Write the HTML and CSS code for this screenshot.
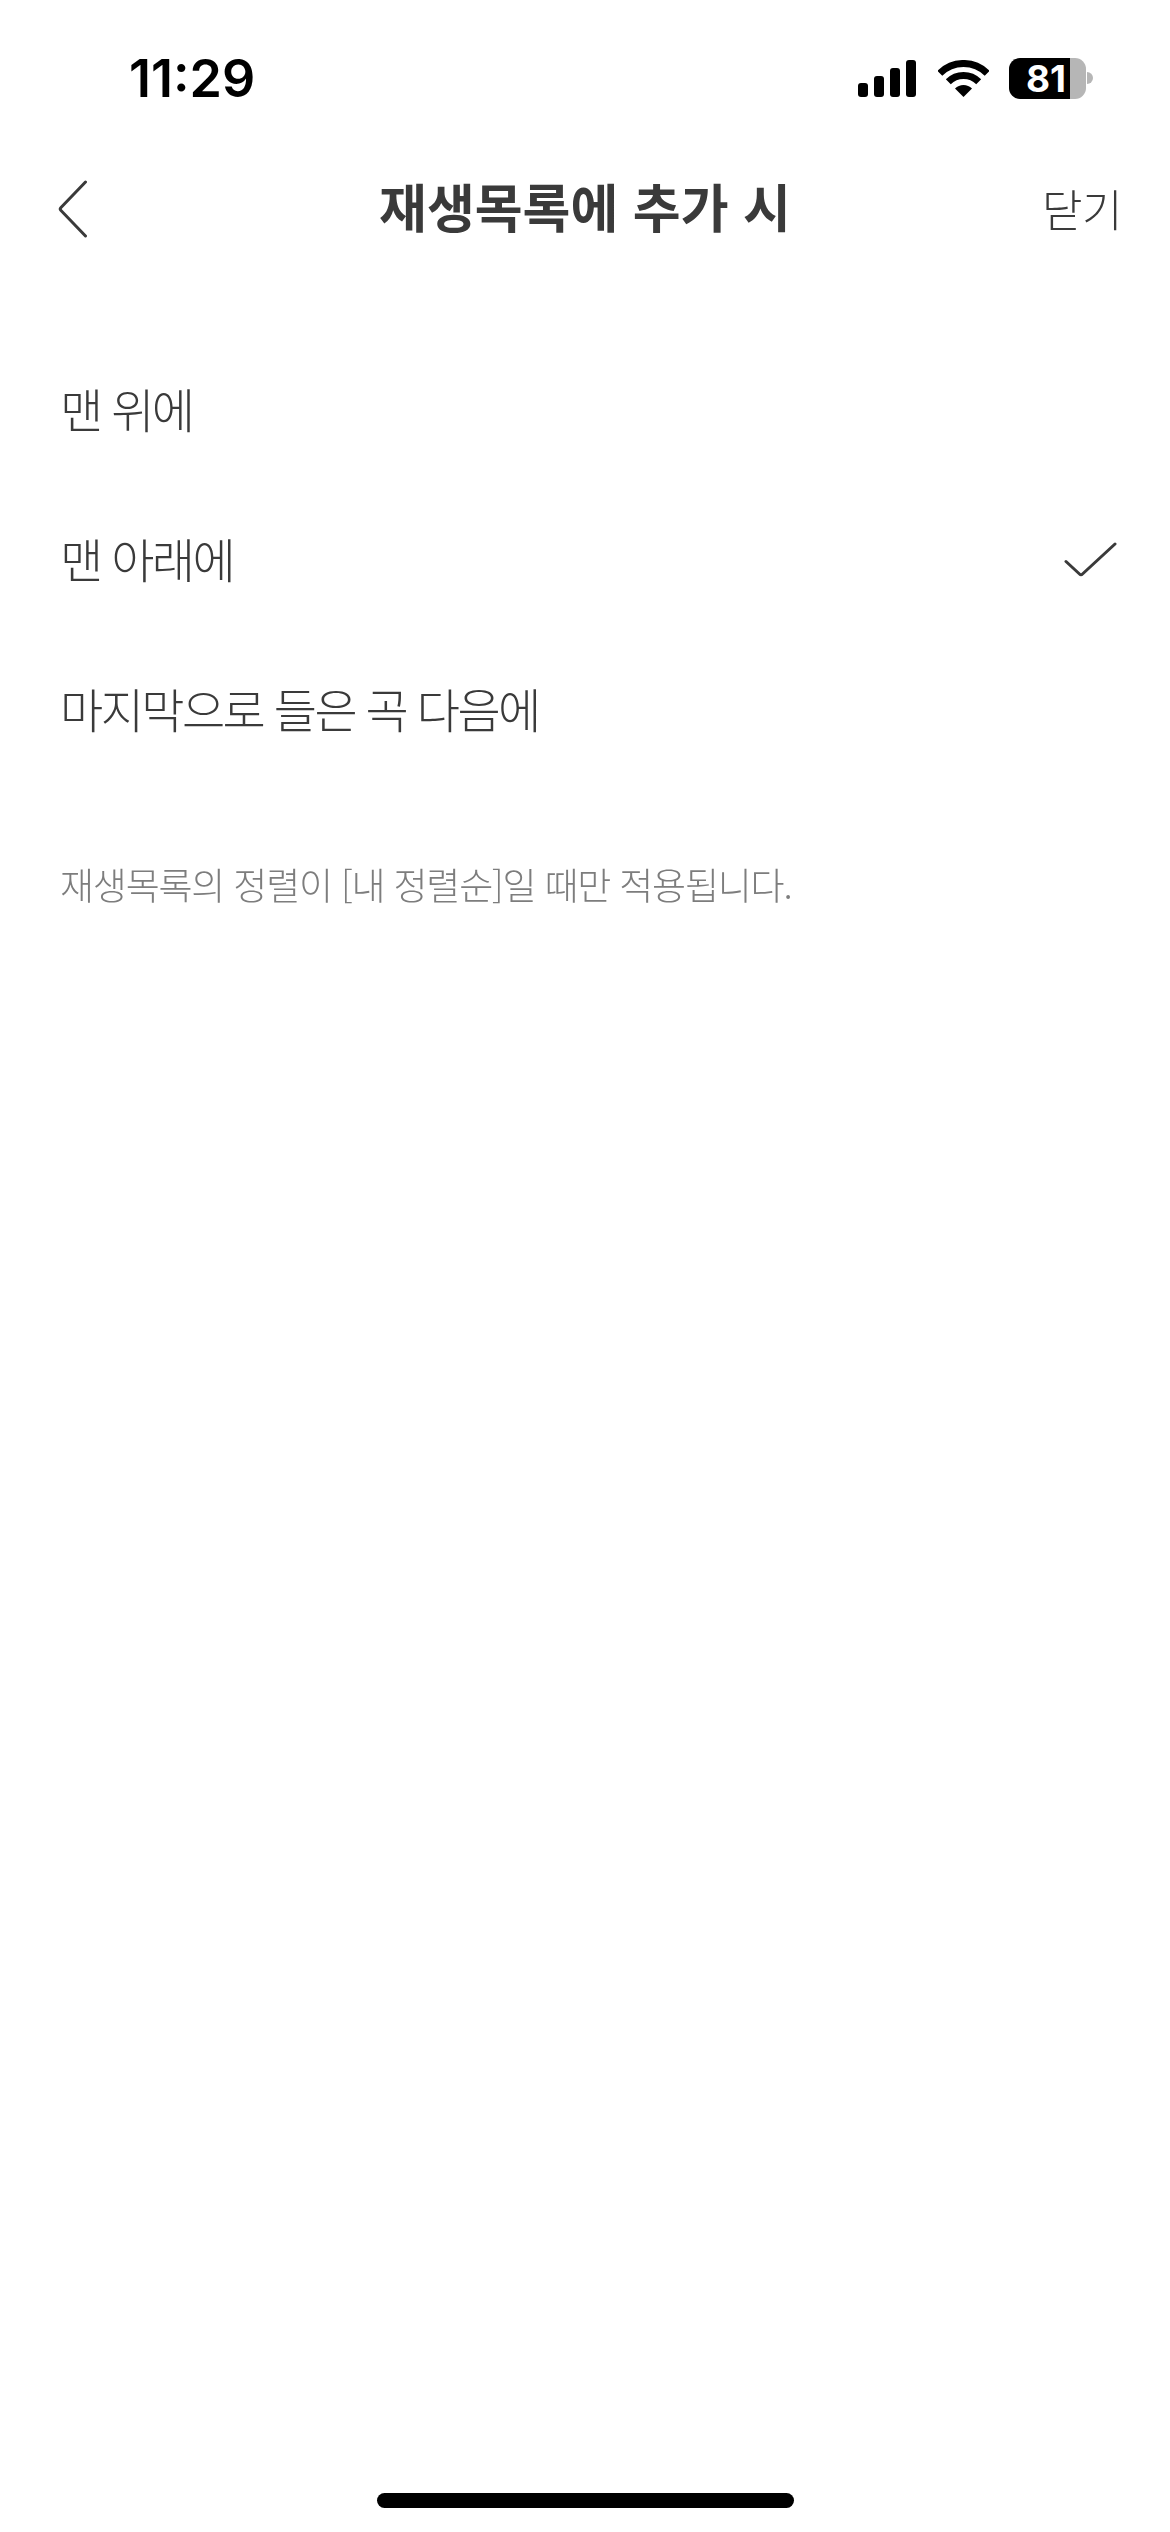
FILE: index.html
```html
<!DOCTYPE html>
<html lang="ko">
<head>
    <meta charset="UTF-8">
    <meta name="viewport" content="width=device-width, initial-scale=1.0">
    <title>재생목록에 추가 시</title>
    <link rel="stylesheet" href="styles.css">
</head>
<body>
    <div class="screen">
        <div class="status-bar">
            <span class="time">11:29</span>
            <div class="status-icons">
                <div class="signal">
                    <span class="bar bar-1"></span>
                    <span class="bar bar-2"></span>
                    <span class="bar bar-3"></span>
                    <span class="bar bar-4"></span>
                </div>
                <svg class="wifi" width="51" height="37" viewBox="0 0 51 37">
                    <path d="M1.8 13.3A33.5 33.5 0 0 1 49.2 13.3" fill="none" stroke="#000" stroke-width="7"/>
                    <path d="M10.3 21.8A21.5 21.5 0 0 1 40.7 21.8" fill="none" stroke="#000" stroke-width="7"/>
                    <path d="M25.5 37L17 28.5A12 12 0 0 1 34 28.5Z" fill="#000"/>
                </svg>
                <div class="battery">
                    <div class="battery-level">81</div>
                    <div class="battery-rest"></div>
                    <div class="battery-nub"></div>
                </div>
            </div>
        </div>

        <div class="nav-bar">
            <svg class="back" width="30" height="58" viewBox="0 0 30 58">
                <path d="M27.5 2L3 27.5Q1.5 29 3 30.5L27.5 56" fill="none" stroke="#3a3a3a" stroke-width="3" stroke-linecap="round"/>
            </svg>
            <h1 class="nav-title">재생목록에 추가 시</h1>
            <span class="nav-close">닫기</span>
        </div>

        <ul class="options">
            <li class="option">맨 위에</li>
            <li class="option">
                맨 아래에
                <svg class="check" width="54" height="38" viewBox="0 0 54 38">
                    <path d="M2 19.5L15.5 32Q17 33.5 18.5 32L51 2" fill="none" stroke="#3a3a3a" stroke-width="3" stroke-linecap="round"/>
                </svg>
            </li>
            <li class="option">마지막으로 들은 곡 다음에</li>
        </ul>

        <p class="note">재생목록의 정렬이 [내 정렬순]일 때만 적용됩니다.</p>

        <div class="home-indicator"></div>
    </div>
</body>
</html>
```

FILE: styles.css
```css
* {
    box-sizing: border-box;
}

body {
    margin: 0;
    background: #fff;
    color: #3a3a3a;
    font-family: "Noto Sans CJK KR", "Noto Sans", sans-serif;
}

.screen {
    display: flex;
    flex-direction: column;
    height: 2532px;
    overflow: hidden;
}

.status-bar {
    display: flex;
    justify-content: space-between;
    align-items: center;
    height: 156px;
    padding: 0 77px 0 129px;
    color: #000;
}

.time {
    font-family: Inter, sans-serif;
    font-size: 52px;
    font-weight: 600;
}

.status-icons {
    display: flex;
    align-items: center;
    gap: 22px;
}

.signal {
    display: flex;
    align-items: flex-end;
    gap: 6px;
    height: 37px;
}

.bar {
    width: 10px;
    background: #000;
    border-radius: 3px;
}

.bar-1 { height: 14px; }
.bar-2 { height: 21px; }
.bar-3 { height: 29px; }
.bar-4 { height: 37px; }

.battery {
    display: flex;
    align-items: center;
    height: 41px;
    margin-left: -2px;
}

.battery-level {
    width: 61px;
    height: 41px;
    background: #000;
    color: #fff;
    border-radius: 11px 0 0 11px;
    font-family: Inter, sans-serif;
    font-size: 37px;
    font-weight: 700;
    line-height: 41px;
    text-align: right;
    padding-right: 4px;
}

.battery-rest {
    width: 16px;
    height: 41px;
    background: #b6b6b6;
    border-radius: 0 11px 11px 0;
}

.battery-nub {
    width: 6px;
    height: 12px;
    margin-left: 1px;
    background: #b6b6b6;
    border-radius: 0 6px 6px 0;
}

.nav-bar {
    display: grid;
    grid-template-columns: 1fr auto 1fr;
    align-items: center;
    height: 106px;
    padding: 0 48px;
    will-change: transform;
}

.back {
    margin-left: 10px;
}

.nav-title {
    margin: 0;
    padding-bottom: 7px;
    font-size: 52px;
    font-weight: 700;
}

.nav-close {
    justify-self: end;
    padding-bottom: 2px;
    font-size: 44px;
    font-weight: 300;
    letter-spacing: -0.5px;
}

.options {
    list-style: none;
    margin: 70px 0 0;
    padding: 0;
    will-change: transform;
}

.option {
    display: flex;
    justify-content: space-between;
    align-items: center;
    height: 150px;
    padding: 0 52px 0 60px;
    font-size: 47px;
    font-weight: 300;
    letter-spacing: -2.6px;
}

.check {
    margin-top: 8px;
}

.note {
    margin: 77px 0 0;
    padding: 0 60px;
    color: #7d7d7d;
    font-size: 37px;
    font-weight: 300;
    line-height: 50px;
    letter-spacing: -1.2px;
    will-change: transform;
}

.home-indicator {
    width: 417px;
    height: 15px;
    margin: auto auto 24px;
    background: #000;
    border-radius: 8px;
}
```
